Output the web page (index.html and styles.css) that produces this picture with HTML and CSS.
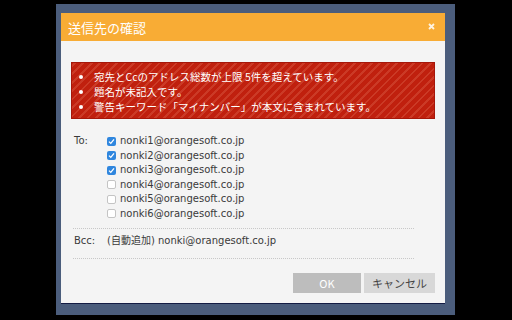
FILE: index.html
```html
<!DOCTYPE html>
<html lang="ja">

<head>
    <meta charset="UTF-8">
    <title>送信先の確認</title>
    <link rel="stylesheet" href="styles.css">
</head>

<body>

    <div class="frame">
        <div class="dialog">
            <div class="dialog-header">
                <h2>送信先の確認</h2>
                <span class="close">
                    <svg width="7" height="7" viewBox="0 0 7 7">
                        <path d="M1 1 L6 6 M6 1 L1 6" stroke="#fff3e0" stroke-width="1.8" />
                    </svg>
                </span>
            </div>
            <div class="dialog-body">
                <ul class="alert">
                    <li>宛先とCcのアドレス総数が上限 5件を超えています。</li>
                    <li>題名が未記入です。</li>
                    <li>警告キーワード「マイナンバー」が本文に含まれています。</li>
                </ul>

                <div class="field">
                    <div class="field-label">To:</div>
                    <div class="field-list">
                        <label class="addr">
                            <svg class="check" width="9" height="9" viewBox="0 0 9 9">
                                <rect width="9" height="9" rx="2" fill="#2f86de" />
                                <path d="M2 4.6 L3.8 6.4 L7 2.4" fill="none" stroke="#fff" stroke-width="1.3" />
                            </svg>nonki1@orangesoft.co.jp</label>
                        <label class="addr">
                            <svg class="check" width="9" height="9" viewBox="0 0 9 9">
                                <rect width="9" height="9" rx="2" fill="#2f86de" />
                                <path d="M2 4.6 L3.8 6.4 L7 2.4" fill="none" stroke="#fff" stroke-width="1.3" />
                            </svg>nonki2@orangesoft.co.jp</label>
                        <label class="addr">
                            <svg class="check" width="9" height="9" viewBox="0 0 9 9">
                                <rect width="9" height="9" rx="2" fill="#2f86de" />
                                <path d="M2 4.6 L3.8 6.4 L7 2.4" fill="none" stroke="#fff" stroke-width="1.3" />
                            </svg>nonki3@orangesoft.co.jp</label>
                        <label class="addr">
                            <svg class="check" width="9" height="9" viewBox="0 0 9 9">
                                <rect x="0.5" y="0.5" width="8" height="8" rx="1.5" fill="#fff" stroke="#c4c4c4" />
                            </svg>nonki4@orangesoft.co.jp</label>
                        <label class="addr">
                            <svg class="check" width="9" height="9" viewBox="0 0 9 9">
                                <rect x="0.5" y="0.5" width="8" height="8" rx="1.5" fill="#fff" stroke="#c4c4c4" />
                            </svg>nonki5@orangesoft.co.jp</label>
                        <label class="addr">
                            <svg class="check" width="9" height="9" viewBox="0 0 9 9">
                                <rect x="0.5" y="0.5" width="8" height="8" rx="1.5" fill="#fff" stroke="#c4c4c4" />
                            </svg>nonki6@orangesoft.co.jp</label>
                    </div>
                </div>

                <div class="sep"></div>

                <div class="field bcc">
                    <div class="field-label">Bcc:</div>
                    <div class="field-list">(自動追加) nonki@orangesoft.co.jp</div>
                </div>

                <div class="sep"></div>

                <div class="buttons">
                    <button class="btn btn-ok">OK</button>
                    <button class="btn btn-cancel">キャンセル</button>
                </div>
            </div>
        </div>
    </div>

</body>

</html>
```

FILE: styles.css
```css
body {
    margin: 0;
    background-color: #000;
    font-family: "DejaVu Sans", "Noto Sans CJK JP", sans-serif;
    width: 512px;
    height: 320px;
    overflow: hidden;
}

.frame {
    margin: 4px 0 0 56px;
    width: 399px;
    height: 311px;
    box-sizing: border-box;
    padding: 9px 10px 0 5px;
    background-color: #4b5d7c;
}

.dialog {
    background-color: #f4f4f4;
    height: 290px;
    border-bottom: 1px solid #141c44;
}

.dialog-header {
    height: 28px;
    background-color: #f8ac35;
    display: flex;
    align-items: center;
    justify-content: space-between;
    padding: 0 10px 0 7px;
}

.dialog-header h2 {
    margin: 0;
    color: #fff;
    font-family: "Noto Sans CJK JP", sans-serif;
    font-weight: normal;
    font-size: 13px;
}

.close {
    display: flex;
    margin-top: -1px;
}

.dialog-body {
    padding: 21px 10px 0 10px;
}

.alert {
    margin: 0;
    padding: 6px 0 6px 22px;
    height: 57px;
    box-sizing: border-box;
    color: #fff;
    font-family: "Noto Sans CJK JP", sans-serif;
    font-size: 10.5px;
    line-height: 15px;
    border: 1px solid #a5170a;
    background-color: #c0200e;
    background-image: repeating-linear-gradient(-45deg,
            #c0200e 0, #c0200e 4px, #cb3a26 4px, #cb3a26 6px);
}

.field {
    display: flex;
    margin-top: 15px;
    padding-left: 3px;
    color: #3a3a3a;
    font-size: 10px;
    line-height: 14.5px;
}

.field-label {
    width: 33px;
}

.field-list {
    display: flex;
    flex-direction: column;
}

.addr {
    display: flex;
    align-items: center;
}

.check {
    margin-right: 4px;
    flex-shrink: 0;
}

.sep {
    margin: 7px 21px 0 2px;
    border-top: 1px dotted #c8c8c8;
}

.field.bcc {
    margin-top: 5px;
    margin-bottom: 9px;
}

.field.bcc .field-list {
    display: block;
}

.buttons {
    display: flex;
    justify-content: flex-end;
    gap: 3px;
    margin-top: 14px;
}

.btn {
    height: 20px;
    border: none;
    padding: 0;
    font-family: "Noto Sans CJK JP", sans-serif;
    font-size: 11px;
    cursor: pointer;
}

.btn-ok {
    width: 68px;
    background-color: #bdbdbd;
    color: #fff;
}

.btn-cancel {
    width: 71px;
    background-color: #d8d8d8;
    color: #444;
}
```
